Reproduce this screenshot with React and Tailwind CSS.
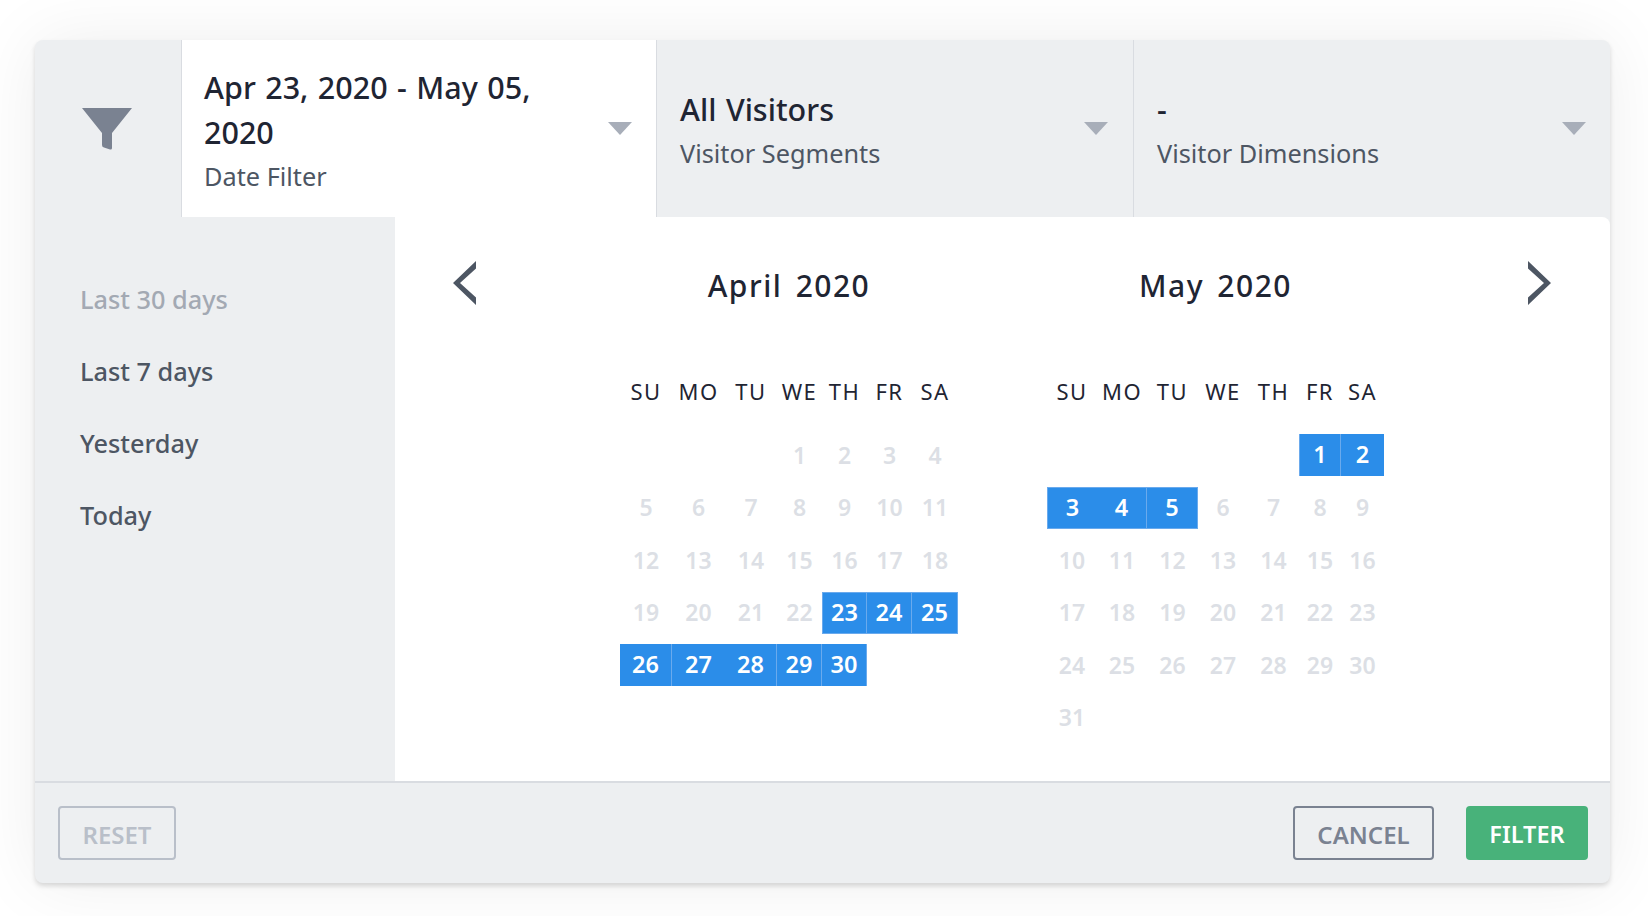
const weekdays = ["SU", "MO", "TU", "WE", "TH", "FR", "SA"];

const april = [
  [null, null, null, "1", "2", "3", "4"],
  ["5", "6", "7", "8", "9", "10", "11"],
  ["12", "13", "14", "15", "16", "17", "18"],
  ["19", "20", "21", "22", "23", "24", "25"],
  ["26", "27", "28", "29", "30", null, null],
];

const may = [
  [null, null, null, null, null, "1", "2"],
  ["3", "4", "5", "6", "7", "8", "9"],
  ["10", "11", "12", "13", "14", "15", "16"],
  ["17", "18", "19", "20", "21", "22", "23"],
  ["24", "25", "26", "27", "28", "29", "30"],
  ["31", null, null, null, null, null, null],
];

function Caret() {
  return (
    <svg width="24" height="13" viewBox="0 0 24 13" className="shrink-0">
      <path d="M0 0h24L12 13z" fill="#a8aeb9" />
    </svg>
  );
}

function FilterTab({ title, label, active, className }) {
  return (
    <div
      className={`flex items-center justify-between border-l border-[#d9dce1] ${
        active ? "bg-white" : ""
      } ${className}`}
    >
      <div className="mt-[5px] max-w-[370px]">
        <div className="text-[30.5px] leading-[45px] font-medium text-[#1f2533] [word-spacing:1.5px]">{title}</div>
        <div className="text-[25.3px] leading-[43px] text-[#4d5663]">{label}</div>
      </div>
      <Caret />
    </div>
  );
}

function Month({ title, columns, rows, selected }) {
  return (
    <div>
      <div className="text-center text-[30px] leading-[45px] tracking-[1.5px] font-medium text-[#1f2533] [word-spacing:4px]">
        {title}
      </div>
      <div className={`mt-[67px] grid ${columns} text-center`}>
        {weekdays.map((d) => (
          <div key={d} className="text-[22px] leading-[32px] tracking-[1.5px] text-[#1f2533]">
            {d}
          </div>
        ))}
      </div>
      <div className={`mt-[27px] grid ${columns} gap-y-[10.5px] text-center`}>
        {rows.flat().map((d, i) =>
          d && selected[d] !== undefined ? (
            <div
              key={i}
              className={`h-[42px] flex items-center justify-center bg-[#2b8de9] text-white text-[23.5px] font-semibold ${selected[d]}`}
            >
              {d}
            </div>
          ) : (
            <div key={i} className="h-[42px] flex items-center justify-center text-[#dcdfe5] text-[23px] font-semibold">
              {d}
            </div>
          ),
        )}
      </div>
    </div>
  );
}

const line = "border-r border-[#6aaaed]";
const box = "border-y border-[#6aaaed]";

const aprilSelected = {
  23: `${box} border-l ${line}`,
  24: `${box} ${line}`,
  25: `${box} ${line}`,
  26: line,
  27: "",
  28: line,
  29: line,
  30: line,
};

const maySelected = {
  1: `border-l border-[#6aaaed] ${line}`,
  2: "",
  3: `${box} border-l border-[#6aaaed]`,
  4: `${box} ${line}`,
  5: `${box} ${line}`,
};

export default function App() {
  return (
    <div className="min-h-[916px] bg-white pt-10 px-[35px] font-['Noto_Sans',sans-serif]">
      <div className="w-[1575px] h-[843px] flex flex-col rounded-lg bg-[#edeff1] shadow-[0_3px_5px_rgba(0,0,0,0.14),0_0_70px_rgba(0,0,0,0.07)]">
        <div className="h-[177px] flex shrink-0">
          <div className="w-[146px] pr-[3px] flex items-center justify-center">
            <svg width="50" height="42" viewBox="0 0 50 42">
              <path d="M0 0H50L30 25V40Q30 42 28 41.5L22 39.5Q20 39 20 37V25Z" fill="#7a8291" />
            </svg>
          </div>
          <FilterTab title="Apr 23, 2020 - May 05, 2020" label="Date Filter" active className="w-[475px] pl-[22px] pr-6" />
          <FilterTab title="All Visitors" label="Visitor Segments" className="w-[477px] pl-[23px] pr-[25px]" />
          <FilterTab title="-" label="Visitor Dimensions" className="w-[477px] pl-[23px] pr-6" />
        </div>
        <div className="flex-1 flex min-h-0">
          <div className="w-[360px] pl-[45px] pt-[59px] text-[25.3px] font-medium text-[#4d5663]">
            <div className="h-[72px] leading-[46px] text-[#a3a9b3]">Last 30 days</div>
            <div className="h-[72px] leading-[46px]">Last 7 days</div>
            <div className="h-[72px] leading-[46px]">Yesterday</div>
            <div className="h-[72px] leading-[46px]">Today</div>
          </div>
          <div className="relative flex-1 bg-white rounded-tr-lg flex justify-center gap-[89px] pt-[46px] pr-px">
            <svg width="23" height="44" viewBox="0 0 23 44" className="absolute left-[58px] top-[44px]">
              <path d="M23 0V7.5L7 22 23 36.5V44L0 22Z" fill="#4d5663" />
            </svg>
            <Month title="April 2020" columns="grid-cols-[52px_53px_52px_45px_45px_45px_46px]" rows={april} selected={aprilSelected} />
            <Month title="May 2020" columns="grid-cols-[50px_50px_51px_50px_51px_42px_43px]" rows={may} selected={maySelected} />
            <svg width="23" height="44" viewBox="0 0 23 44" className="absolute right-[59px] top-[44px]">
              <path d="M0 0V7.5L16 22 0 36.5V44L23 22Z" fill="#4d5663" />
            </svg>
          </div>
        </div>
        <div className="h-[102px] shrink-0 flex items-center justify-between border-t-2 border-[#d9dce1] pl-[23px] pr-[22px]">
          <button className="w-[118px] h-[54px] pt-1 rounded border-2 border-[#b9bfc9] text-[24px] font-semibold text-[#b9bfc9]">RESET</button>
          <div className="flex gap-8">
            <button className="w-[141px] h-[54px] pt-1 rounded border-2 border-[#7a8291] text-[24px] font-semibold text-[#7a8291]">CANCEL</button>
            <button className="w-[122px] h-[54px] pt-1 rounded bg-[#48b27a] text-[23.5px] font-semibold text-white">FILTER</button>
          </div>
        </div>
      </div>
    </div>
  );
}
